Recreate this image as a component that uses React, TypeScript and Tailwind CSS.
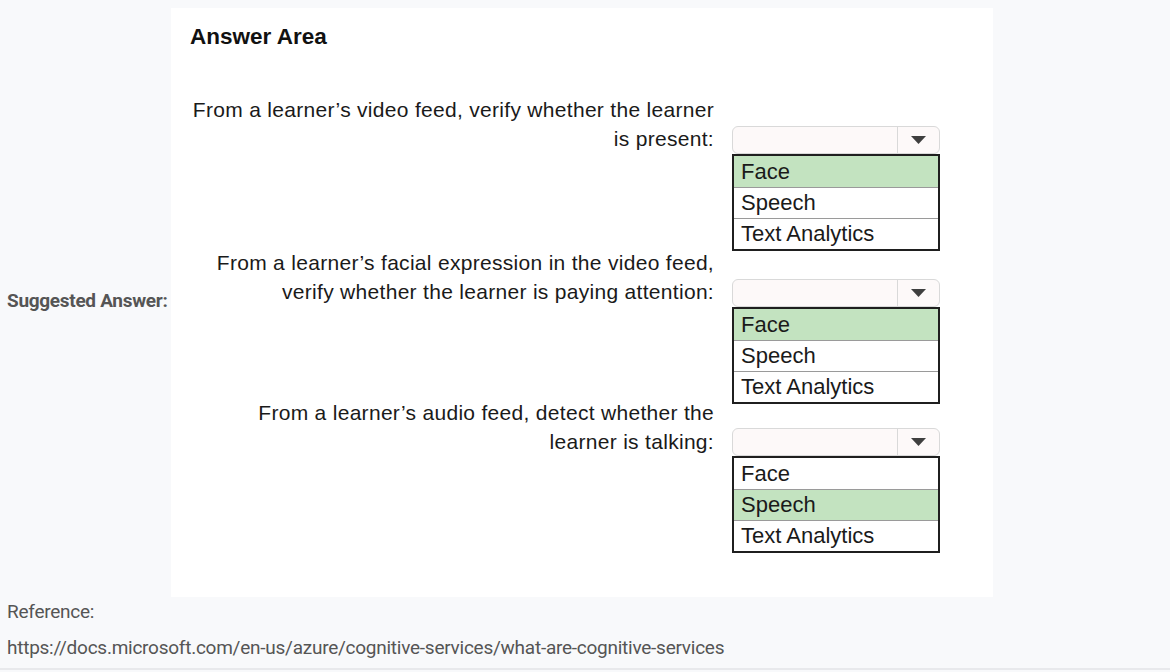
import React from "react";

const Dropdown = ({ selected }: { selected: number }) => {
  const opts = ["Face", "Speech", "Text Analytics"];
  return (
    <div className="w-[208px]">
      <div className="flex h-[28px] rounded-[6px] border border-[#d9d9d9] bg-[#fdf9f9]">
        <div className="flex-1" />
        <div className="flex w-[42px] items-center justify-center border-l border-[#d9d9d9]">
          <svg width="15" height="8" viewBox="0 0 15 8">
            <polygon points="0,0 15,0 7.5,8" fill="#3f3f3f" />
          </svg>
        </div>
      </div>
      <div className="border-2 border-[#1f1f1f] bg-white">
        {opts.map((o, i) => (
          <div
            key={o}
            className={`flex h-[31px] items-center pl-[7px] text-[22px] leading-none text-[#1a1a1a] ${
              i > 0 ? "border-t border-[#9a9a9a]" : ""
            } ${i === selected ? "bg-[#c3e3c0]" : ""}`}
          >
            {o}
          </div>
        ))}
      </div>
    </div>
  );
};

const Question = ({
  l1,
  l2,
  selected,
  className,
  ddClass,
}: {
  l1: string;
  l2: string;
  selected: number;
  className?: string;
  ddClass: string;
}) => (
  <div className={`flex ${className ?? ""}`}>
    <div className="w-[524px] text-right text-[21px] leading-[29px] tracking-[0.3px] text-[#1a1a1a]">
      <div>{l1}</div>
      <div>{l2}</div>
    </div>
    <div className={`ml-[18px] ${ddClass}`}>
      <Dropdown selected={selected} />
    </div>
  </div>
);

export default function App() {
  return (
    <div className="h-[672px] w-[1170px] bg-[#f8f9fb] font-['Roboto',sans-serif]">
      <div className="flex pt-[8px]">
        <div className="flex w-[171px] items-center pl-[7px]">
          <span className="-mt-[2px] text-[19px] font-bold tracking-[-0.3px] text-[#555555]">
            Suggested Answer:
          </span>
        </div>
        <div className="h-[589px] w-[822px] bg-white px-[19px] font-['Liberation_Sans',Arial,sans-serif]">
          <div className="pt-[16px] text-[22.5px] font-bold leading-[26px] text-[#111]">
            Answer Area
          </div>
          <div className="mt-[45px]">
            <Question
              ddClass="mt-[31px]"
              l1="From a learner’s video feed, verify whether the learner"
              l2="is present:"
              selected={0}
            />
            <Question
              className="-mt-[3px]"
              ddClass="mt-[31px]"
              l1="From a learner’s facial expression in the video feed,"
              l2="verify whether the learner is paying attention:"
              selected={0}
            />
            <Question
              className="-mt-[6px]"
              ddClass="mt-[30px]"
              l1="From a learner’s audio feed, detect whether the"
              l2="learner is talking:"
              selected={1}
            />
          </div>
        </div>
      </div>
      <div className="-mt-[3px] pl-[7px] text-[19px] leading-[36px] tracking-[-0.25px] text-[#555555]">
        <div>Reference:</div>
        <div>https://docs.microsoft.com/en-us/azure/cognitive-services/what-are-cognitive-services</div>
      </div>
      <div className="mt-[2px] h-[2px] bg-[#e8e9ec]" />
    </div>
  );
}
